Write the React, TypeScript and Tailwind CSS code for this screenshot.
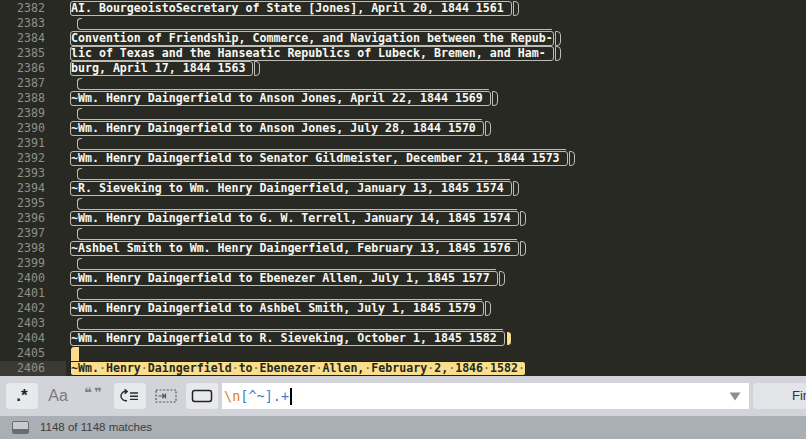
import React from 'react';

type Row = { n: number; text?: string; kind: 'text' | 'empty' | 'selEmpty' | 'selText'; selNl?: boolean };

const rows: Row[] = [
  { n: 2382, kind: 'text', text: 'AI. BourgeoistoSecretary of State [Jones], April 20, 1844 1561 ' },
  { n: 2383, kind: 'empty' },
  { n: 2384, kind: 'text', text: 'Convention of Friendship, Commerce, and Navigation between the Repub-' },
  { n: 2385, kind: 'text', text: 'lic of Texas and the Hanseatic Republics of Lubeck, Bremen, and Ham- ' },
  { n: 2386, kind: 'text', text: 'burg, April 17, 1844 1563 ' },
  { n: 2387, kind: 'empty' },
  { n: 2388, kind: 'text', text: '~Wm. Henry Daingerfield to Anson Jones, April 22, 1844 1569 ' },
  { n: 2389, kind: 'empty' },
  { n: 2390, kind: 'text', text: '~Wm. Henry Daingerfield to Anson Jones, July 28, 1844 1570 ' },
  { n: 2391, kind: 'empty' },
  { n: 2392, kind: 'text', text: '~Wm. Henry Daingerfield to Senator Gildmeister, December 21, 1844 1573 ' },
  { n: 2393, kind: 'empty' },
  { n: 2394, kind: 'text', text: '~R. Sieveking to Wm. Henry Daingerfield, January 13, 1845 1574 ' },
  { n: 2395, kind: 'empty' },
  { n: 2396, kind: 'text', text: '~Wm. Henry Daingerfield to G. W. Terrell, January 14, 1845 1574 ' },
  { n: 2397, kind: 'empty' },
  { n: 2398, kind: 'text', text: '~Ashbel Smith to Wm. Henry Daingerfield, February 13, 1845 1576 ' },
  { n: 2399, kind: 'empty' },
  { n: 2400, kind: 'text', text: '~Wm. Henry Daingerfield to Ebenezer Allen, July 1, 1845 1577 ' },
  { n: 2401, kind: 'empty' },
  { n: 2402, kind: 'text', text: '~Wm. Henry Daingerfield to Ashbel Smith, July 1, 1845 1579 ' },
  { n: 2403, kind: 'empty' },
  { n: 2404, kind: 'text', text: '~Wm. Henry Daingerfield to R. Sieveking, October 1, 1845 1582 ', selNl: true },
  { n: 2405, kind: 'selEmpty' },
  { n: 2406, kind: 'selText', text: '~Wm. Henry Daingerfield to Ebenezer Allen, February 2, 1846 1582 ' },
];

const CW = 6.98;

const mono = { fontFamily: '"DejaVu Sans Mono", "Liberation Mono", monospace' };

function EditorRow({ row, next }: { row: Row; next?: Row }) {
  const current = row.n === 2406;
  return (
    <div className="flex h-[15px] items-stretch">
      <div
        className={`w-[66px] shrink-0 pr-[21px] text-right leading-[15px] text-[#8f908a] ${current ? 'bg-[#3b3a32]' : ''}`}
      >
        {row.n}
      </div>
      <div className="flex items-stretch pl-[4px]">
        {row.kind === 'text' && (
          <>
            <span className="box-border h-[15px] whitespace-pre rounded-[3px] border border-[#bdbdb5] font-bold leading-[13px] text-[#f8f8f2]">
              {row.text}
            </span>
            {row.selNl ? (
              <span className="ml-[1px] box-border h-[15px] w-[6px] rounded-r-[4px] border border-[#1e1f1a] bg-[#f9df8c]" />
            ) : (
              <span className="ml-[1px] box-border h-[15px] w-[6px] rounded-r-[4px] border border-[#bdbdb5]" />
            )}
          </>
        )}
        {row.kind === 'empty' && (
          <span className="relative flex">
            <span
              className="ml-[7px] mt-[2px] box-border h-[12px] rounded-l-[4px] border-b border-l border-[#bdbdb5]"
              style={{ width: Math.round(((next?.text?.length ?? 10) - 1) * CW) }}
            />
            <span className="absolute left-[7px] top-[2px] h-[4px] w-[5px] rounded-tl-[4px] border-l border-t border-[#bdbdb5]" />
          </span>
        )}
        {row.kind === 'selEmpty' && (
          <span className="box-border h-[15px] w-[9px] rounded-tl-[4px] border-l border-t border-[#1e1f1a] bg-[#f9df8c]" />
        )}
        {row.kind === 'selText' && (
          <span className="box-border h-[15px] whitespace-pre rounded-b-[3px] rounded-tr-[3px] border border-[#1e1f1a] bg-[#f9df8c] font-bold leading-[13px] text-[#272822]">
            {row.text!.split('').map((c, i) =>
              c === ' ' ? (
                <span key={i} className="font-normal text-[#6f6440]">
                  ·
                </span>
              ) : (
                <span key={i}>{c}</span>
              )
            )}
          </span>
        )}
      </div>
    </div>
  );
}

function WrapIcon() {
  return (
    <svg width="22" height="16" viewBox="0 0 22 16" fill="none" stroke="#2b2b2b" strokeWidth="1.4">
      <path d="M8 3.5 A4.7 4.7 0 1 0 8 12.5" />
      <path d="M5.6 1.4 L8.2 3.5 L5.6 5.6" />
      <path d="M11 5h8M11 8.2h8M11 11.4h8" />
    </svg>
  );
}

function SelectionIcon() {
  return (
    <svg width="22" height="16" viewBox="0 0 22 16" fill="none" stroke="#555" strokeWidth="1.2">
      <rect x="1" y="2" width="20" height="12" strokeDasharray="2 1.6" />
      <path d="M3.5 8h6M7.3 5.8 L9.6 8 L7.3 10.2M10.5 5.5v5" />
    </svg>
  );
}

function HighlightIcon() {
  return (
    <svg width="22" height="16" viewBox="0 0 22 16" fill="none" stroke="#222" strokeWidth="1.5">
      <rect x="1.5" y="2.5" width="19" height="11" rx="2.2" />
    </svg>
  );
}

function PanelIcon() {
  return (
    <svg width="17" height="13" viewBox="0 0 17 13">
      <rect x="0.5" y="0.5" width="16" height="12" rx="1.5" fill="#c9cbd0" stroke="#6a6c70" />
      <rect x="1" y="8" width="15" height="4.5" fill="#6a6c70" />
    </svg>
  );
}

export default function App() {
  return (
    <div className="flex h-[439px] w-[806px] flex-col overflow-hidden bg-[#282923]">
      <div className="h-[376px] shrink-0 overflow-hidden pt-[1px] text-[11.6px]" style={mono}>
        {rows.map((r, i) => (
          <EditorRow key={r.n} row={r} next={rows[i + 1]} />
        ))}
      </div>

      <div
        className="flex h-[40px] shrink-0 items-center gap-[4px] overflow-hidden bg-[#d2d4d9] pl-[6px]"
        style={{ fontFamily: '"Liberation Sans", Arial, sans-serif' }}
      >
        <div className="flex h-[26px] w-[32px] shrink-0 items-center justify-center rounded-[3px] bg-[#e8e9ec] text-[17px] font-bold text-[#1f1f1f]">
          .*
        </div>
        <div className="flex h-[26px] w-[32px] shrink-0 items-center justify-center text-[16px] text-[#7a7b7e]">
          Aa
        </div>
        <div
          className="flex h-[26px] w-[32px] shrink-0 items-center justify-center pb-[6px] text-[13px] font-bold tracking-[2px] text-[#7a7b7e]"
          style={{ fontFamily: '"DejaVu Sans", sans-serif' }}
        >
          ❝❞
        </div>
        <div className="flex h-[26px] w-[32px] shrink-0 items-center justify-center rounded-[3px] bg-[#e8e9ec]">
          <WrapIcon />
        </div>
        <div className="flex h-[26px] w-[32px] shrink-0 items-center justify-center">
          <SelectionIcon />
        </div>
        <div className="flex h-[26px] w-[32px] shrink-0 items-center justify-center rounded-[3px] bg-[#e8e9ec]">
          <HighlightIcon />
        </div>
        <div className="flex h-[26px] w-[527px] shrink-0 items-center justify-between bg-white pl-[2px] pr-[8px]">
          <div className="flex items-center text-[13.5px]" style={mono}>
            <span className="text-[#e0801c]">\n</span>
            <span className="text-[#3f7fc4]">[^~]</span>
            <span className="text-[#3f7fc4]">.+</span>
            <span className="ml-[1px] h-[17px] w-[2px] bg-black" />
          </div>
          <svg width="12" height="9" viewBox="0 0 12 9">
            <path d="M0.5 0.5 H11.5 L6 8.5 Z" fill="#8e8e8e" />
          </svg>
        </div>
        <div className="flex h-[26px] w-[80px] shrink-0 items-center rounded-[3px] bg-[#e3e4e8] pl-[39px] text-[13px] text-[#333]">
          Find
        </div>
      </div>

      <div
        className="flex h-[23px] shrink-0 items-center gap-[11px] bg-[#aaaeb5] pl-[12px] text-[11.5px] text-[#3c3d40]"
        style={{ fontFamily: '"Liberation Sans", Arial, sans-serif' }}
      >
        <PanelIcon />
        <span>1148 of 1148 matches</span>
      </div>
    </div>
  );
}
